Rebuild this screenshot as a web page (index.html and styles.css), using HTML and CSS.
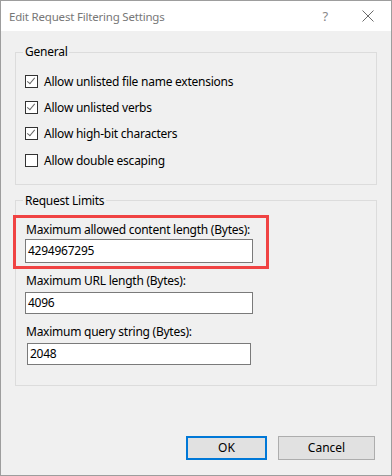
FILE: index.html
```html
<!DOCTYPE html>
<html lang="en">

<head>
    <meta charset="UTF-8">
    <meta name="viewport" content="width=device-width, initial-scale=1.0">
    <title>Edit Request Filtering Settings</title>
    <link rel="stylesheet" href="styles.css">
</head>

<body>

    <div class="window">

        <!-- Title bar -->
        <div class="titlebar">
            <span class="title">Edit Request Filtering Settings</span>
            <span class="help">?</span>
            <span class="close">
                <svg width="12" height="12" viewBox="0 0 12 12">
                    <path d="M0.5 0.5 L11.5 11.5 M11.5 0.5 L0.5 11.5" stroke="#6a6a6a" stroke-width="1" fill="none"/>
                </svg>
            </span>
        </div>

        <!-- Dialog content -->
        <div class="content">

            <fieldset class="group general">
                <legend>General</legend>
                <div class="check-row">
                    <span class="checkbox checked"></span>
                    <span>Allow unlisted file name extensions</span>
                </div>
                <div class="check-row">
                    <span class="checkbox checked"></span>
                    <span>Allow unlisted verbs</span>
                </div>
                <div class="check-row">
                    <span class="checkbox checked"></span>
                    <span>Allow high-bit characters</span>
                </div>
                <div class="check-row">
                    <span class="checkbox"></span>
                    <span>Allow double escaping</span>
                </div>
            </fieldset>

            <fieldset class="group limits">
                <legend>Request Limits</legend>
                <div class="highlight">
                    <div class="field-label">Maximum allowed content length (Bytes):</div>
                    <div class="textbox tall">4294967295</div>
                </div>
                <div class="field-label">Maximum URL length (Bytes):</div>
                <div class="textbox">4096</div>
                <div class="field-label spaced">Maximum query string (Bytes):</div>
                <div class="textbox narrow">2048</div>
            </fieldset>

            <!-- Buttons -->
            <div class="button-container">
                <button class="default">OK</button>
                <button>Cancel</button>
            </div>
        </div>
    </div>

</body>

</html>
```

FILE: styles.css
```css
body {
    margin: 0;
    padding: 0;
    font-family: 'Noto Sans', 'Open Sans', sans-serif;
    font-size: 12px;
    letter-spacing: -0.25px;
    color: #000;
    background-color: #f0f0f0;
}

.window {
    width: 392px;
    height: 476px;
    box-sizing: border-box;
    border: 1px solid #9d9d9d;
    background-color: #f0f0f0;
    overflow: hidden;
}

/* Title bar */
.titlebar {
    height: 30px;
    background-color: #fff;
    display: flex;
    align-items: center;
    padding-left: 8px;
    color: #777;
}

.title {
    flex: 1;
    font-size: 11.5px;
    letter-spacing: -0.2px;
}

.help {
    font-size: 13px;
    color: #888;
    margin-right: 34px;
}

.close {
    display: flex;
    margin-right: 17px;
}

/* Group boxes */
.content {
    padding: 0 14px;
}

.group {
    margin: 0;
    padding: 8px 9px 10px 9px;
    border: 1px solid #dcdcdc;
}

.group legend {
    padding: 0 2px;
    margin-left: -2px;
    line-height: 16px;
}

.general {
    margin-top: 13px;
}

.limits {
    margin-top: 8px;
    padding-top: 6px;
    padding-bottom: 20px;
}

.check-row {
    height: 26.4px;
    display: flex;
    align-items: center;
    gap: 6px;
}

.checkbox {
    width: 11px;
    height: 11px;
    border: 1px solid #333;
    background-color: #fff;
    position: relative;
}

.checkbox.checked::after {
    content: "";
    position: absolute;
    left: 3px;
    top: 0px;
    width: 3px;
    height: 7px;
    border-right: 1px solid #666;
    border-bottom: 1px solid #666;
    transform: rotate(40deg);
}

/* Text fields */
.highlight {
    margin-left: -12px;
    width: 241px;
    border: 3px solid #f04343;
    padding: 4px 0 3px 9px;
}

.field-label {
    line-height: 16px;
    margin-top: 4px;
    margin-bottom: 3px;
    padding-left: 1px;
}

.highlight .field-label {
    margin-top: 0;
    margin-bottom: 1px;
}

.field-label.spaced {
    margin-top: 10px;
}

.textbox {
    height: 20px;
    line-height: 20px;
    border: 1px solid #7a7a7a;
    background-color: #fff;
    padding-left: 2px;
    width: 224px;
}

.textbox.tall {
    height: 22px;
    line-height: 22px;
}

.textbox.narrow {
    margin-left: 2px;
    width: 220px;
}

/* Buttons */
.button-container {
    display: flex;
    justify-content: flex-end;
    gap: 11px;
    margin-top: 50px;
    padding-right: 2px;
}

button {
    font-family: 'Noto Sans', 'Open Sans', sans-serif;
    font-size: 12px;
    height: 24px;
    width: 97px;
    background-color: #e1e1e1;
    border: 1px solid #adadad;
    padding: 0;
    color: #000;
}

button.default {
    width: 81px;
    border: 2px solid #0078d7;
}
```
